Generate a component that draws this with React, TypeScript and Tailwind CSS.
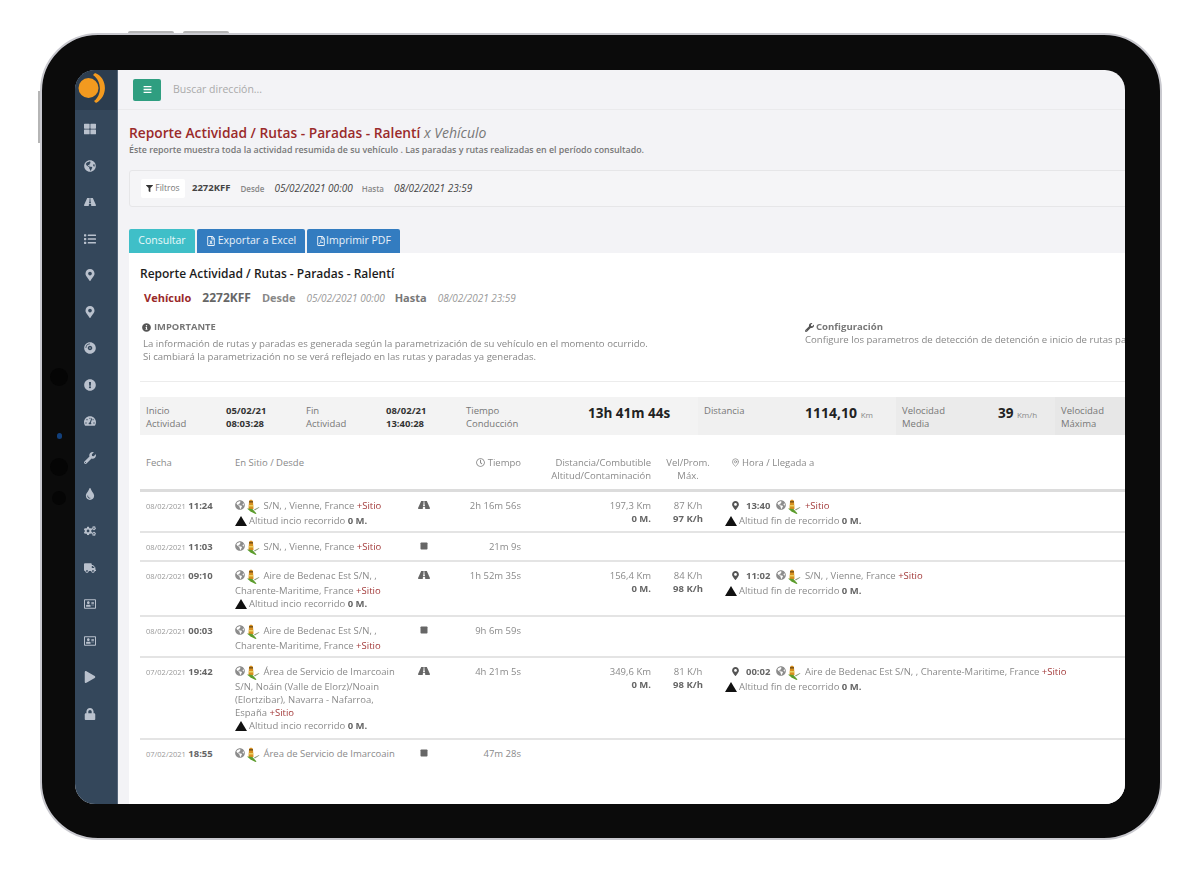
import React from "react";
import {
  FaThLarge, FaGlobeAmericas, FaRoad, FaList, FaMapMarkerAlt, FaCompactDisc, FaExclamationCircle,
  FaTachometerAlt, FaWrench, FaTint, FaCogs, FaTruck, FaRegAddressCard, FaPlay, FaLock, FaBars, FaFilter,
  FaRegFileExcel, FaRegFilePdf, FaInfoCircle, FaRegClock, FaStop,
} from "react-icons/fa";
import { MapPin } from "lucide-react";

const sideIcons = [
  FaThLarge, FaGlobeAmericas, FaRoad, FaList, FaMapMarkerAlt, FaMapMarkerAlt, FaCompactDisc,
  FaExclamationCircle, FaTachometerAlt, FaWrench, FaTint, FaCogs, FaTruck, FaRegAddressCard, FaRegAddressCard, FaPlay, FaLock,
];

// little place marker that sits next to every address
const Poi = () => (
  <svg viewBox="0 0 14 15" className="ml-[1px] mr-[1px] inline-block h-[15px] w-[14px] align-[-5px]">
    <path d="M3 2.5C3 .3 7 .3 7 2.5L7.5 10H2.5z" fill="#d8901f" />
    <path d="M3 2.2h4v1.3H3z" fill="#6b4a16" />
    <path d="M2.8 6h4.4l.1 1.6H2.7z" fill="#e8d060" />
    <path d="M1 9.5L6.5 10l4 4.5-1 .5-5-2.5z" fill="#5c9c2c" />
    <path d="M8 10.5l5-2.5.4.6-4.6 3z" fill="#8a9a7a" />
  </svg>
);

const Mountain = () => (
  <svg viewBox="0 0 12 10" className="h-[10px] w-[12px] shrink-0">
    <path d="M6 0l6 10H0z" fill="#111" />
  </svg>
);

const Globe = () => <FaGlobeAmericas className="inline-block align-[-1px] text-[10px] text-[#8c8c8c]" />;

const Site = ({ children }: { children: React.ReactNode }) => (
  <div>
    <Globe />
    <Poi /> {children} <span className="text-[#a33a3a]">+Sitio</span>
  </div>
);

const Altitude = ({ label }: { label: string }) => (
  <div className="flex items-center gap-[2px]">
    <Mountain />
    <span>
      {label} <b className="font-bold text-[#666]">0 M.</b>
    </span>
  </div>
);

type Row = {
  date: string;
  hour: string;
  site: React.ReactNode;
  moving: boolean;
  time: string;
  dist?: string;
  avg?: string;
  max?: string;
  arrive?: string;
  arriveSite?: string;
  h: string;
};

const rows: Row[] = [
  { date: "08/02/2021", hour: "11:24", site: "S/N, , Vienne, France", moving: true, time: "2h 16m 56s", dist: "197,3 Km", avg: "87 K/h", max: "97 K/h", arrive: "13:40", arriveSite: "", h: "h-[41px]" },
  { date: "08/02/2021", hour: "11:03", site: "S/N, , Vienne, France", moving: false, time: "21m 9s", h: "h-[29px]" },
  { date: "08/02/2021", hour: "09:10", site: "Aire de Bedenac Est S/N, , Charente-Maritime, France", moving: true, time: "1h 52m 35s", dist: "156,4 Km", avg: "84 K/h", max: "98 K/h", arrive: "11:02", arriveSite: "S/N, , Vienne, France", h: "h-[55px]" },
  { date: "08/02/2021", hour: "00:03", site: "Aire de Bedenac Est S/N, , Charente-Maritime, France", moving: false, time: "9h 6m 59s", h: "h-[41px]" },
  { date: "07/02/2021", hour: "19:42", site: "Área de Servicio de Imarcoain S/N, Noáin (Valle de Elorz)/Noain (Elortzibar), Navarra - Nafarroa, España", moving: true, time: "4h 21m 5s", dist: "349,6 Km", avg: "81 K/h", max: "98 K/h", arrive: "00:02", arriveSite: "Aire de Bedenac Est S/N, , Charente-Maritime, France", h: "h-[82px]" },
];

const cols = "grid grid-cols-[95px_170px_38px_78px_130px_74px_400px]";

const TableRow = ({ r }: { r: Row }) => (
  <div className={`${cols} ${r.h} border-b-2 border-[#e4e4e4] pt-[7px] text-[9.5px] leading-[13px] text-[#8a8a8a]`}>
    <div className="pl-[6px] whitespace-nowrap">
      <span className="text-[7.5px] text-[#999]">{r.date}</span> <b className="text-[9.5px] font-bold text-[#666]">{r.hour}</b>
    </div>
    <div>
      <Site>{r.site}</Site>
      {r.moving && <Altitude label="Altitud incio recorrido" />}
    </div>
    <div className="flex justify-center text-[#666]">
      {r.moving ? <FaRoad className="text-[12px]" /> : <FaStop className="mt-[2px] text-[8px]" />}
    </div>
    <div className="text-right whitespace-nowrap">{r.time}</div>
    <div className="text-right">
      {r.dist}
      {r.dist && <div className="font-bold text-[#666]">0 M.</div>}
    </div>
    <div className="text-center">
      {r.avg}
      {r.max && <div className="font-bold text-[#666]">{r.max}</div>}
    </div>
    {r.arrive && (
      <div>
        <div className="flex h-[13px] items-start whitespace-nowrap pl-[6px]">
          <FaMapMarkerAlt className="mr-[6px] mt-[2px] text-[9px] text-[#555]" />
          <b className="mr-[6px] font-bold text-[#666]">{r.arrive}</b>
          <span>
            <Globe />
            <Poi /> {r.arriveSite} <span className="text-[#a33a3a]">+Sitio</span>
          </span>
        </div>
        <div className="mt-[2px]">
          <Altitude label="Altitud fin de recorrido" />
        </div>
      </div>
    )}
  </div>
);

const Stat = ({ a, b }: { a: string; b: string }) => (
  <div className="text-[9.5px] leading-[13px] text-[#777]">
    {a}
    <br />
    {b}
  </div>
);

export default function App() {
  return (
    <div className="h-[872px] w-[1200px] overflow-hidden bg-white pl-[40px] pt-[33px] font-['Open_Sans',sans-serif]">
      <div className="relative flex h-[807px] w-[1122px] rounded-[58px] border-2 border-[#c9c9cf] bg-[#0b0b0b] pl-[33px] pt-[35px]">
        <div className="absolute -top-[4px] left-[86px] h-[2px] w-[46px] rounded-t bg-[#b5b5b5]" />
        <div className="absolute -top-[4px] left-[141px] h-[2px] w-[46px] rounded-t bg-[#b5b5b5]" />
        <div className="absolute -left-[4px] top-[56px] h-[52px] w-[2px] bg-[#b5b5b5]" />
        <div className="absolute left-[8px] top-[333px] h-[18px] w-[18px] rounded-full bg-[#050505]" />
        <div className="absolute left-[15px] top-[398px] h-[6px] w-[5px] rounded-full bg-[#12407c]" />
        <div className="absolute left-[8px] top-[423px] h-[18px] w-[18px] rounded-full bg-[#050505]" />
        <div className="absolute left-[10px] top-[456px] h-[14px] w-[14px] rounded-full bg-[#050505]" />

        <div className="flex h-[734px] w-[1050px] overflow-hidden rounded-[20px] bg-[#f3f3f6] blur-[0.3px]">
          <aside className="flex w-[43px] shrink-0 flex-col border-r border-[#56677a] bg-[#34475b]">
            <div className="h-[40px] bg-[#2c3d4f] pt-[2px]">
              <svg viewBox="0 0 32 32" className="h-[32px] w-[32px]">
                <circle cx="13.5" cy="16" r="10" fill="#f39a1f" />
                <path d="M20 1C32 5 34 24 21 31L19 29C27 23 27 9 18 3z" fill="#f39a1f" />
              </svg>
            </div>
            <div className="flex flex-col items-center gap-[24.55px] pr-[13px] pt-[13px] text-[#b9c1cd]">
              {sideIcons.map((Icon, i) => (
                <Icon key={i} className="h-[12px] w-[12px]" />
              ))}
            </div>
          </aside>

          <main className="min-w-0 flex-1">
            <div className="flex h-[40px] items-center border-b border-[#eaeaec] pl-[15px]">
              <button className="flex h-[22px] w-[28px] items-center justify-center rounded-[2px] bg-[#2f9e80] text-white">
                <FaBars className="text-[9px]" />
              </button>
              <span className="ml-[12px] text-[10.5px] text-[#aaaaaa]">Buscar dirección...</span>
            </div>

            <div className="pl-[11px]">
              <h1 className="mt-[14px] text-[13.75px] leading-[18px] font-semibold whitespace-nowrap text-[#9a2a2a]">
                Reporte Actividad / Rutas - Paradas - Ralentí <i className="text-[14px] font-normal text-[#777]">x Vehículo</i>
              </h1>
              <p className="mt-[1px] text-[8.85px] leading-[14px] font-semibold whitespace-nowrap text-[#777]">
                Éste reporte muestra toda la actividad resumida de su vehículo . Las paradas y rutas realizadas en el período consultado.
              </p>

              <div className="mt-[13px] flex h-[37px] w-[1010px] items-center rounded-[3px] border border-[#e6e6e8] bg-[#f5f5f7] pl-[11px] whitespace-nowrap">
                <span className="flex h-[19px] w-[44px] items-center justify-center gap-[2px] rounded-[2px] bg-white text-[8.5px] text-[#777]">
                  <FaFilter className="text-[7px] text-[#333]" /> Filtros
                </span>
                <b className="ml-[7px] text-[9.5px] font-bold text-[#444]">2272KFF</b>
                <span className="ml-[10px] text-[8px] font-semibold text-[#888]">Desde</span>
                <i className="ml-[10px] text-[10px] text-[#444]">05/02/2021 00:00</i>
                <span className="ml-[9px] text-[8px] font-semibold text-[#888]">Hasta</span>
                <i className="ml-[10px] text-[10px] text-[#444]">08/02/2021 23:59</i>
              </div>

              <div className="mt-[22px] flex h-[24px] gap-[2px] text-[10.5px] text-white/90">
                <button className="w-[66px] rounded-t-[2px] bg-[#3fbfc8]">Consultar</button>
                <button className="flex w-[108px] items-center justify-center gap-[2px] rounded-t-[2px] bg-[#337cc0]">
                  <FaRegFileExcel className="text-[10px]" /> Exportar a Excel
                </button>
                <button className="flex w-[93px] items-center justify-center rounded-t-[2px] bg-[#337cc0]">
                  <FaRegFilePdf className="text-[10px]" />Imprimir PDF
                </button>
              </div>

              <section className="h-[551px] w-[1040px] bg-white pl-[11px]">
                <h2 className="pt-[13px] text-[12px] leading-[16px] font-semibold text-[#1c1c1c]">
                  Reporte Actividad / Rutas - Paradas - Ralentí
                </h2>
                <div className="mt-[7px] flex items-baseline pl-[4px] whitespace-nowrap">
                  <b className="text-[11px] font-bold text-[#9a2a2a]">Vehículo</b>
                  <b className="ml-[11px] text-[12px] font-bold text-[#666]">2272KFF</b>
                  <b className="ml-[11px] text-[11px] font-bold text-[#888]">Desde</b>
                  <i className="ml-[11px] text-[10px] text-[#999]">05/02/2021 00:00</i>
                  <b className="ml-[10px] text-[11px] font-bold text-[#777]">Hasta</b>
                  <i className="ml-[11px] text-[10px] text-[#999]">08/02/2021 23:59</i>
                </div>

                <div className="mt-[14px] flex h-[61px] w-[985px] border-b border-[#ececec]">
                  <div className="w-[665px] shrink-0">
                    <div className="flex items-center gap-[3px] pl-[2px] text-[9.4px] leading-[12px] font-bold text-[#777]">
                      <FaInfoCircle className="text-[9px] text-[#555]" /> IMPORTANTE
                    </div>
                    <p className="mt-[4px] pl-[3px] text-[9.6px] leading-[13px] whitespace-nowrap text-[#888]">
                      La información de rutas y paradas es generada según la parametrización de su vehículo en el momento ocurrido.
                      <br />
                      Si cambiará la parametrización no se verá reflejado en las rutas y paradas ya generadas.
                    </p>
                  </div>
                  <div className="min-w-0 whitespace-nowrap">
                    <div className="flex items-center gap-[2px] text-[9.6px] leading-[12px] font-bold text-[#777]">
                      <FaWrench className="text-[9px] text-[#555]" /> Configuración
                    </div>
                    <p className="text-[9.6px] leading-[13px] text-[#888]">
                      Configure los parametros de detección de detención e inicio de rutas para su vehículo
                    </p>
                  </div>
                </div>

                <div className="mt-[15px] flex h-[38px] w-[985px] overflow-hidden whitespace-nowrap">
                  <div className="flex w-[558px] shrink-0 bg-[#f3f3f3] pl-[6px] pt-[7px]">
                    <div className="w-[80px]"><Stat a="Inicio" b="Actividad" /></div>
                    <div className="w-[80px] text-[9.5px] leading-[13px] font-bold text-[#333]">05/02/21<br />08:03:28</div>
                    <div className="w-[80px]"><Stat a="Fin" b="Actividad" /></div>
                    <div className="w-[80px] text-[9.5px] leading-[13px] font-bold text-[#333]">08/02/21<br />13:40:28</div>
                    <div className="w-[122px]"><Stat a="Tiempo" b="Conducción" /></div>
                    <div className="mt-[1px] text-[13.5px] leading-[16px] font-bold text-[#222]">13h 41m 44s</div>
                  </div>
                  <div className="flex w-[198px] shrink-0 bg-[#f0f0f0] pl-[6px] pt-[7px]">
                    <div className="w-[101px] text-[9.5px] leading-[13px] text-[#777]">Distancia</div>
                    <div className="mt-[1px] text-[14px] leading-[16px] font-bold text-[#222]">
                      1114,10 <span className="text-[8px] font-normal text-[#888]">Km</span>
                    </div>
                  </div>
                  <div className="flex w-[159px] shrink-0 bg-[#ebebeb] pl-[6px] pt-[7px]">
                    <div className="w-[96px]"><Stat a="Velocidad" b="Media" /></div>
                    <div className="mt-[1px] text-[13.5px] leading-[16px] font-bold text-[#222]">
                      39 <span className="text-[8px] font-normal text-[#888]">Km/h</span>
                    </div>
                  </div>
                  <div className="flex-1 bg-[#e7e7e7] pl-[6px] pt-[7px]"><Stat a="Velocidad" b="Máxima" /></div>
                </div>

                <div className="w-[985px] overflow-hidden">
                  <div className={`${cols} mt-[21px] h-[36px] border-b-[3px] border-[#dcdcdc] text-[9.5px] leading-[13px] text-[#8a8a8a]`}>
                    <div className="pl-[6px]">Fecha</div>
                    <div>En Sitio / Desde</div>
                    <div />
                    <div className="flex items-start justify-end gap-[3px]">
                      <FaRegClock className="mt-[2px] text-[9px]" /> Tiempo
                    </div>
                    <div className="text-right whitespace-nowrap">Distancia/Combutible<br />Altitud/Contaminación</div>
                    <div className="text-center">Vel/Prom.<br />Máx.</div>
                    <div className="flex items-start gap-[2px] pl-[6px]">
                      <MapPin className="mt-[2px] h-[9px] w-[9px]" /> Hora / Llegada a
                    </div>
                  </div>
                  {rows.map((r) => (
                    <TableRow key={r.date + r.hour} r={r} />
                  ))}
                  <div className={`${cols} h-[25px] overflow-hidden pt-[7px] text-[9.5px] leading-[13px] text-[#8a8a8a]`}>
                    <div className="pl-[6px] whitespace-nowrap">
                      <span className="text-[7.5px] text-[#999]">07/02/2021</span> <b className="font-bold text-[#666]">18:55</b>
                    </div>
                    <div>
                      <Site>Área de Servicio de Imarcoain S/N, Noáin (Valle de Elorz)/Noain (Elortzibar), Navarra - Nafarroa, España</Site>
                    </div>
                    <div className="flex justify-center text-[#666]"><FaStop className="mt-[2px] text-[8px]" /></div>
                    <div className="text-right">47m 28s</div>
                  </div>
                </div>
              </section>
            </div>
          </main>
        </div>
      </div>
    </div>
  );
}
